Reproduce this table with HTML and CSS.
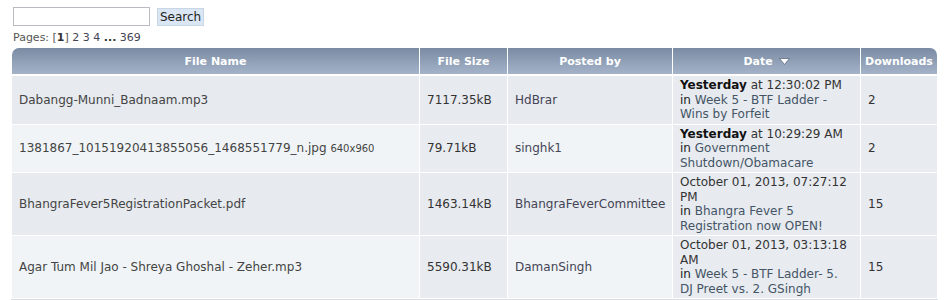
FILE: index.html
```html
<!DOCTYPE html>
<html>
<head>
<meta charset="utf-8">
<link rel="stylesheet" href="styles.css">
</head>
<body>
<div class="page">
  <form class="search">
    <input class="search-input" type="text">
    <button class="search-btn" type="button">Search</button>
  </form>
  <div class="pages">Pages: [<b>1</b>] <a>2</a> <a>3</a> <a>4</a> <b>...</b> <a>369</a></div>
  <table class="files">
    <colgroup>
      <col class="c-name"><col class="c-size"><col class="c-by"><col class="c-date"><col class="c-dl">
    </colgroup>
    <thead>
      <tr>
        <th class="first">File Name</th>
        <th>File Size</th>
        <th>Posted by</th>
        <th>Date <svg class="sort" width="11" height="7" viewBox="0 0 11 7"><path d="M0.5 0.5 H10.5 L5.5 6.5 Z" fill="#fff" stroke="#5d6b80" stroke-width="0.8"/></svg></th>
        <th class="last">Downloads</th>
      </tr>
    </thead>
    <tbody>
      <tr class="odd">
        <td class="name">Dabangg-Munni_Badnaam.mp3</td>
        <td class="size">7117.35kB</td>
        <td class="by">HdBrar</td>
        <td class="date"><div class="when"><b>Yesterday</b> at 12:30:02 PM</div><div class="topic">in <a>Week 5 - BTF Ladder - Wins by Forfeit</a></div></td>
        <td class="dl">2</td>
      </tr>
      <tr class="even">
        <td class="name">1381867_10151920413855056_1468551779_n.jpg <span class="dim">640x960</span></td>
        <td class="size">79.71kB</td>
        <td class="by">singhk1</td>
        <td class="date"><div class="when"><b>Yesterday</b> at 10:29:29 AM</div><div class="topic">in <a>Government Shutdown/Obamacare</a></div></td>
        <td class="dl">2</td>
      </tr>
      <tr class="odd">
        <td class="name">BhangraFever5RegistrationPacket.pdf</td>
        <td class="size">1463.14kB</td>
        <td class="by">BhangraFeverCommittee</td>
        <td class="date"><div class="when">October 01, 2013, 07:27:12 PM</div><div class="topic">in <a>Bhangra Fever 5 Registration now OPEN!</a></div></td>
        <td class="dl">15</td>
      </tr>
      <tr class="even">
        <td class="name">Agar Tum Mil Jao - Shreya Ghoshal - Zeher.mp3</td>
        <td class="size">5590.31kB</td>
        <td class="by">DamanSingh</td>
        <td class="date"><div class="when">October 01, 2013, 03:13:18 AM</div><div class="topic">in <a>Week 5 - BTF Ladder- 5. DJ Preet vs. 2. GSingh</a></div></td>
        <td class="dl">15</td>
      </tr>
    </tbody>
  </table>
</div>
</body>
</html>
```

FILE: styles.css
```css
html, body {
  margin: 0;
  padding: 0;
  background: #fff;
}
body {
  font-family: "DejaVu Sans", Verdana, sans-serif;
  font-size: 12px;
  color: #444;
}
.page {
  padding: 7px 12px 0 12px;
}
.search {
  display: flex;
  align-items: center;
  gap: 7px;
  margin: 0 0 0 1px;
}
.search-input {
  box-sizing: border-box;
  width: 137px;
  height: 19px;
  border: 1px solid #b8bcc2;
  margin: 0;
  padding: 0;
  background: #fff;
}
.search-btn {
  box-sizing: border-box;
  height: 18px;
  padding: 0 2px;
  margin: 0;
  border: 1px solid #c9d6e6;
  background: #dbe6f4;
  font-family: "DejaVu Sans", Verdana, sans-serif;
  font-size: 12px;
  color: #222;
  line-height: 16px;
}
.pages {
  font-size: 11px;
  color: #555;
  margin: 5px 0 0 1px;
  line-height: 13px;
}
.pages b { color: #333; }
.pages a { color: #445; }
.files {
  margin-top: 3px;
  width: 927px;
  table-layout: fixed;
  border-collapse: separate;
  border-spacing: 1px;
  margin-left: -1px;
  border-bottom: 1px solid #d8dbe0;
}
.c-name { width: 407px; }
.c-size { width: 87px; }
.c-by { width: 164px; }
.c-date { width: 187px; }
.c-dl { width: 76px; }
.files th {
  height: 26px;
  padding: 0;
  color: #fff;
  font-weight: bold;
  font-size: 11px;
  background: linear-gradient(#7a8ba3, #a4b3c8);
  border-bottom: 1px solid #fff;
  white-space: nowrap;
}
.files th.first { border-top-left-radius: 7px; }
.files th.last { border-top-right-radius: 7px; }
.sort { vertical-align: 0; margin-left: 2px; }
.files td {
  padding: 2px 7px;
  line-height: 14.5px;
  vertical-align: middle;
}
.odd td { background: #e7eaef; }
.even td { background: #f0f4f7; }
.even td.size, .even td.date, .even td.dl { background: #e8ebf0; }
td.name { color: #444; }
td.name .dim { font-size: 10px; }
td.size { color: #333; }
td.by { color: #445; }
td.date { color: #333; }
td.date b { color: #111; }
td.date .topic { color: #222; }
td.date a { color: #445566; }
td.dl { color: #333; }
```
